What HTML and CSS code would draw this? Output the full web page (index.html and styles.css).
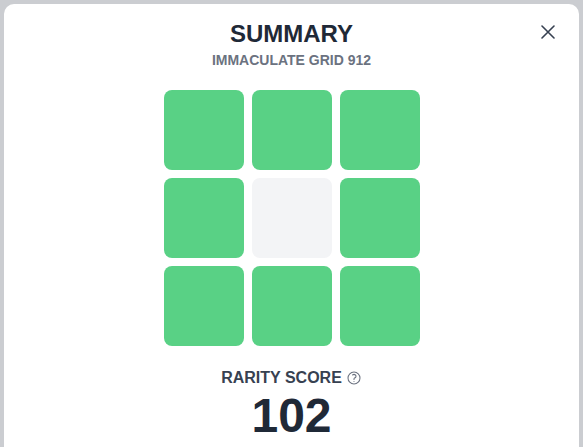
FILE: index.html
```html
<!DOCTYPE html>
<html lang="en">
<head>
<meta charset="utf-8">
<title>Summary</title>
<link rel="stylesheet" href="styles.css">
</head>
<body>
<div class="modal">
  <button class="close" aria-label="Close">
    <svg width="14" height="14" viewBox="0 0 14 14" fill="none" stroke="#374151" stroke-width="1.6" stroke-linecap="round"><path d="M1 1L13 13M13 1L1 13"/></svg>
  </button>
  <h1 class="title">SUMMARY</h1>
  <div class="subtitle">IMMACULATE GRID 912</div>
  <div class="grid">
    <div class="cell hit"></div>
    <div class="cell hit"></div>
    <div class="cell hit"></div>
    <div class="cell hit"></div>
    <div class="cell empty"></div>
    <div class="cell hit"></div>
    <div class="cell hit"></div>
    <div class="cell hit"></div>
    <div class="cell hit"></div>
  </div>
  <div class="rarity">
    <span>RARITY SCORE</span>
    <svg class="help" width="16" height="16" viewBox="0 0 24 24" fill="none" stroke="#6b7280" stroke-width="1.6" stroke-linecap="round" stroke-linejoin="round"><path d="M9.879 7.519c1.171-1.025 3.071-1.025 4.242 0 1.172 1.025 1.172 2.687 0 3.712-.203.179-.43.326-.67.442-.745.361-1.45.999-1.45 1.827v.75M21 12a9 9 0 11-18 0 9 9 0 0118 0zm-9 5.25h.008v.008H12v-.008z"/></svg>
  </div>
  <div class="score">102</div>
</div>
</body>
</html>
```

FILE: styles.css
```css
html, body {
  margin: 0;
  padding: 0;
}
body {
  background: #cbcdd1;
  padding: 4px 4px 0;
  font-family: "Liberation Sans", Arial, sans-serif;
  overflow: hidden;
  height: 447px;
  box-sizing: border-box;
}
.modal {
  position: relative;
  background: #ffffff;
  border-radius: 10px 10px 0 0;
  height: 443px;
  box-sizing: border-box;
  overflow: hidden;
  padding-top: 14px;
  display: flex;
  flex-direction: column;
  align-items: center;
}
.close {
  position: absolute;
  top: 21px;
  right: 24px;
  width: 14px;
  height: 14px;
  padding: 0;
  border: 0;
  background: none;
  display: flex;
}
.title {
  margin: 0;
  font-size: 24px;
  line-height: 32px;
  font-weight: 700;
  color: #1f2937;
}
.subtitle {
  font-size: 14px;
  line-height: 20px;
  font-weight: 700;
  color: #6b7280;
}
.grid {
  margin-top: 20px;
  display: grid;
  grid-template-columns: repeat(3, 80px);
  grid-auto-rows: 80px;
  gap: 8px;
  margin-left: 1px;
  flex-shrink: 0;
}
.cell {
  border-radius: 8px;
}
.hit {
  background: #59d185;
}
.empty {
  background: #f3f4f6;
}
.rarity {
  margin-top: 20px;
  display: flex;
  align-items: center;
  gap: 4px;
  font-size: 16px;
  line-height: 24px;
  font-weight: 700;
  color: #374151;
  flex-shrink: 0;
}
.help {
  display: block;
}
.score {
  margin-top: 2px;
  font-size: 48px;
  line-height: 48px;
  font-weight: 700;
  color: #1f2937;
  flex-shrink: 0;
}
```
